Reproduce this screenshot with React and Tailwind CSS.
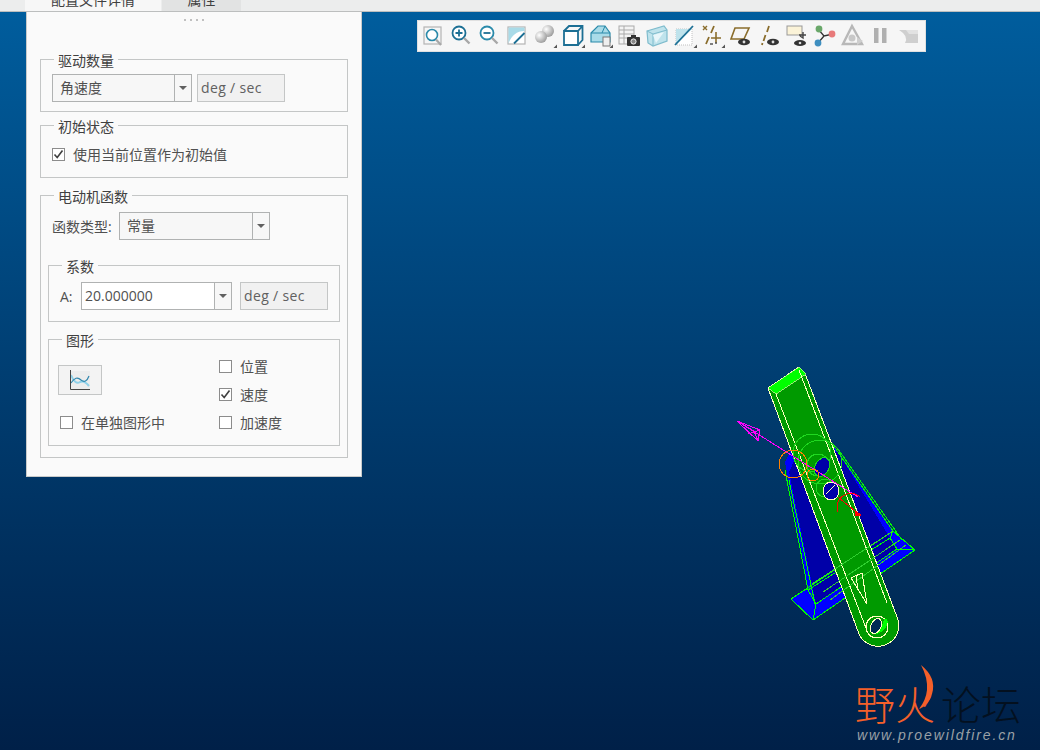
const FONT = "font-['Open_Sans','Noto_Sans_CJK_SC',sans-serif]";

const Group = ({ title, legendClass = "ml-[2px]", className = "", children }) => (
  <fieldset className={`border border-[#c4c6c6] ${className}`}>
    <legend className={`${legendClass} h-5 px-1 pt-1 text-[14px] leading-4 text-[#404040]`}>{title}</legend>
    {children}
  </fieldset>
);

const Combo = ({ value, width, white, leftPad = "pl-[7px]" }) => (
  <div
    className={`flex h-7 border border-[#b0b2b2] ${white ? "bg-white text-[#505050]" : "bg-[#f7f7f7] text-[#505050]"}`}
    style={{ width }}
  >
    <div className={`flex-1 ${leftPad} text-[14px] leading-[26px]`}>{value}</div>
    <div className="flex w-[17px] items-center justify-center border-l border-[#b0b2b2] bg-[#f7f7f7]">
      <div className="h-0 w-0 border-x-4 border-t-[4px] border-x-transparent border-t-[#606060]" />
    </div>
  </div>
);

const Unit = ({ width }) => (
  <div
    className="h-7 border border-[#c4c6c6] bg-[#f1f1f1] pl-[3px] text-[14px] leading-[25px] tracking-[0.35px] text-[#606060]"
    style={{ width }}
  >
    deg / sec
  </div>
);

const Check = ({ label, checked, className = "" }) => (
  <div className={`flex h-5 items-center gap-2 ${className}`}>
    <div className="flex h-[13px] w-[13px] items-center justify-center border border-[#8c8c8c] bg-white">
      {checked && (
        <svg width="11" height="11" viewBox="0 0 11 11">
          <path d="M1.5 5.5 L4.2 8.5 L9.5 1.5" fill="none" stroke="#404040" strokeWidth="1.6" />
        </svg>
      )}
    </div>
    <span className="text-[14px] text-[#505050]">{label}</span>
  </div>
);

const Corner = () => <path d="M25 25 L25 21.5 L21.5 25 Z" fill="#555" />;

const icons = [
  // refit
  <>
    <rect x="4" y="4" width="17" height="17" fill="#f6f6f6" stroke="#b4b4b4" strokeWidth="1.2" />
    <circle cx="12" cy="12" r="5.5" fill="#fff" stroke="#2a8aaa" strokeWidth="1.6" />
    <path d="M16 16.5 L21 22" stroke="#a8a8a8" strokeWidth="2.2" />
  </>,
  // zoom in
  <>
    <circle cx="11" cy="10" r="6.5" fill="#fff" stroke="#1c6f94" strokeWidth="1.8" />
    <path d="M7.5 10 H14.5 M11 6.5 V13.5" stroke="#1c6f94" strokeWidth="1.8" />
    <path d="M16 15 L21.5 20.5" stroke="#a8a8a8" strokeWidth="2.4" />
  </>,
  // zoom out
  <>
    <circle cx="11" cy="10" r="6.5" fill="#fff" stroke="#2a8aaa" strokeWidth="1.8" />
    <path d="M7.5 10 H14.5" stroke="#1c6f94" strokeWidth="1.8" />
    <path d="M16 15 L21.5 20.5" stroke="#a8a8a8" strokeWidth="2.4" />
  </>,
  // repaint
  <>
    <rect x="4" y="4" width="17" height="17" fill="#fff" stroke="#b4b4b4" strokeWidth="1.2" />
    <path d="M4.5 4.5 H20.5 V8 Q9 8 4.5 20.5 Z" fill="#a9dbe8" />
    <path d="M10 20.5 L20.5 10" stroke="#1c6f94" strokeWidth="1.8" />
  </>,
  // appearance
  <>
    <defs>
      <radialGradient id="ball" cx="0.35" cy="0.35" r="0.8">
        <stop offset="0" stopColor="#ffffff" />
        <stop offset="1" stopColor="#8c8c8c" />
      </radialGradient>
    </defs>
    <circle cx="16" cy="8" r="6" fill="url(#ball)" />
    <circle cx="9" cy="14" r="6" fill="url(#ball)" />
    <Corner />
  </>,
  // named view cube
  <>
    <path d="M4 8 H18 V22 H4 Z" fill="#fff" stroke="#1c6f94" strokeWidth="1.8" />
    <path d="M4 8 L9 3 H22.5 V17 L18 22 M18 8 L22.5 3" fill="none" stroke="#1c6f94" strokeWidth="1.8" />
    <Corner />
  </>,
  // section box
  <>
    <path d="M3 10 L10 3 H17 L22 10 V19 H3 Z" fill="#a9dbe8" stroke="#2a8aaa" strokeWidth="1.2" />
    <path d="M3 10 H22 M17 3 L14 10" stroke="#2a8aaa" strokeWidth="1" fill="none" />
    <rect x="15" y="14" width="7" height="9" fill="#eee" stroke="#777" />
    <Corner />
  </>,
  // table with camera
  <>
    <rect x="3" y="3" width="15" height="18" fill="#f4f4f4" stroke="#aaa" />
    <path d="M3 7 H18 M3 11 H18 M3 15 H18 M8 3 V21" stroke="#aaa" />
    <rect x="11" y="14" width="13" height="9" rx="1" fill="#333" />
    <rect x="15" y="12" width="5" height="3" fill="#333" />
    <circle cx="17.5" cy="18.5" r="2.6" fill="#888" stroke="#eee" />
  </>,
  // translucent cube
  <>
    <path d="M3 8 L20 3 L23 7 V18 L9 23 L4 20 Z" fill="#bfe3ec" stroke="#7fbccd" strokeWidth="1.2" />
    <path d="M3 8 L9 11 L23 7 M9 11 V23" stroke="#7fbccd" fill="none" />
    <path d="M9 12 L20 9 L12 20 Z" fill="#e8f6fa" />
  </>,
  // plane diagonal
  <>
    <path d="M4 6 H20 V22 H4 Z" fill="#fff" stroke="#c0c0c0" strokeDasharray="1 1" />
    <path d="M4 6 H20 L4 22 Z" fill="#bfe3ec" />
    <path d="M3 22 L21 3" stroke="#1c6f94" strokeWidth="1.8" />
    <Corner />
  </>,
  // datum points
  <>
    <path d="M3 3 L7 7 M7 3 L3 7" stroke="#8a6d2c" strokeWidth="1.4" />
    <path d="M14 3 L11 10 M9 14 L6 21" stroke="#8a6d2c" strokeWidth="1.8" />
    <path d="M16 9 V20 M11 15 H21" stroke="#8a6d2c" strokeWidth="1.6" />
    <path d="M15 20 L17 20 M10 21 H13" stroke="#555" strokeWidth="1.4" />
    <Corner />
  </>,
  // plane display
  <>
    <path d="M7 5 H21 L16 16 H3 Z" fill="none" stroke="#8a6d2c" strokeWidth="1.6" />
    <ellipse cx="16" cy="19" rx="6" ry="3.2" fill="#333" />
    <circle cx="16" cy="19" r="1.4" fill="#ddd" />
  </>,
  // axis display
  <>
    <path d="M13 3 L11 9 M9.5 12 L7.5 18 M6.5 20 L6 22" stroke="#8a6d2c" strokeWidth="1.8" />
    <ellipse cx="17" cy="19" rx="6" ry="3.2" fill="#333" />
    <circle cx="17" cy="19" r="1.4" fill="#ddd" />
  </>,
  // note display
  <>
    <rect x="3" y="3" width="15" height="9" fill="#fbf3d8" stroke="#999" />
    <path d="M15 12 H22 M19 9 V15 L16 13" stroke="#444" strokeWidth="1.4" fill="none" />
    <ellipse cx="16" cy="20" rx="6" ry="3" fill="#333" />
    <circle cx="16" cy="20" r="1.3" fill="#ddd" />
  </>,
  // connection nodes
  <>
    <path d="M6 6 L12 13 L21 11 M12 13 L6 20" stroke="#333" strokeWidth="1.3" fill="none" />
    <circle cx="7" cy="6" r="3.4" fill="#6aa86a" />
    <circle cx="20" cy="11" r="3.4" fill="#e87a7a" />
    <circle cx="6" cy="20" r="3.4" fill="#3f8fc0" />
  </>,
  // disabled triangle
  <>
    <path d="M12 3 L22 21 H3 Z" fill="none" stroke="#b8b8b8" strokeWidth="2.4" />
    <circle cx="12" cy="15" r="3.5" fill="#c8c8c8" />
    <path d="M17 14 L23 18 L17 22 Z" fill="#cfcfcf" />
  </>,
  // pause
  <>
    <rect x="6" y="5" width="4.5" height="15" fill="#b0b0b0" />
    <rect x="14" y="5" width="4.5" height="15" fill="#b0b0b0" />
  </>,
  // disabled swept block
  <>
    <path d="M3 7 H22 V20 H9 Q13 13 3 7 Z" fill="#cfcfcf" />
    <path d="M10 7 H22 V11 H13 Z" fill="#e2e2e2" />
  </>,
];

const Toolbar = () => (
  <div className="mt-2 ml-[55px] flex h-[32px] w-[509px] items-center gap-[2px] self-start border border-[#e0e0e0] bg-[#f6f6f6] pl-[2px]">
    {icons.map((icon, i) => (
      <svg key={i} width="26" height="26" viewBox="0 0 26 26" className="shrink-0">
        {icon}
      </svg>
    ))}
  </div>
);

// wireframe part, page coordinates minus the canvas origin (y - 12)
const Model = () => (
  <svg
    width="1040"
    height="738"
    viewBox="0 12 1040 738"
    shapeRendering="crispEdges"
    className="absolute top-0 left-0"
  >
    {/* bracket */}
    <path d="M785 462 L795 442 L835 447 L893 531 L915 550 L813 620 L791 599 L808 588 Z" fill="#0000ff" />
    <path d="M789 472 L800 448 L838 452 L890 538 L897 549 L816 604 Z" fill="#0000a8" />
    <path d="M791 599 L813 620 L915 550 L893 531 Z" fill="none" stroke="#00ff00" />
    <path d="M816 604 L897 549 L890 538 L808 590 Z" fill="none" stroke="#00ff00" />
    <path d="M791 599 L808 588 M813 620 L816 604 M915 550 L897 549 M893 531 L890 538" stroke="#00ff00" />
    <path d="M785 470 L808 590 M789 480 L815 604 M833 445 L893 531 M838 449 L902 540" stroke="#00ff00" fill="none" />
    {/* arm */}
    <path d="M768 388 L799 367 L806 376 L897 617 A20.5 20.5 0 0 1 859 634 Z" fill="#009a00" stroke="#ffffc0" />
    <path d="M768 388 L799 367 L806 374 L776 394 Z" fill="#00ff00" stroke="#ffffc0" strokeWidth="0.6" />
    <path d="M776 394 L866 628 M799 370 L887 603" stroke="#ffffc0" fill="none" />
    <path d="M812 584 L893 531 M823 592 L900 540 M830 600 L906 545" stroke="#30d030" fill="none" />
    {/* holes and rings */}
    <circle cx="812" cy="453" r="19" fill="none" stroke="#20d820" />
    <circle cx="820" cy="462" r="22" fill="none" stroke="#20d820" />
    <circle cx="818" cy="465" r="11" fill="none" stroke="#20d820" />
    <ellipse cx="822" cy="467" rx="7" ry="10" transform="rotate(30 822 467)" fill="#0000a8" stroke="#20d820" />
    <circle cx="825" cy="488" r="9" fill="none" stroke="#20d820" />
    <ellipse cx="831" cy="491" rx="8" ry="9" fill="#0000a8" stroke="#ffffc0" />
    <path d="M826 494 L835 485" stroke="#ffffc0" />
    {/* end of the arm */}
    <circle cx="877" cy="627" r="11" fill="#009a00" stroke="#ffffc0" />
    <path d="M876 634 Q886 632 888 622 Q886 617 884 619 Q882 630 874 631 Z" fill="#00ff00" />
    <ellipse cx="876" cy="626" rx="5" ry="8" transform="rotate(25 876 626)" fill="#002a55" stroke="#ffffc0" />
    <path d="M851 578 L862 573 L867 604 Z M856 576 L858 590" fill="none" stroke="#ffffc0" />
    {/* motor symbol */}
    <path d="M737 421 L858 497" stroke="#ff00ff" />
    <path d="M737 421 L760 430 L758 441 Z M737 421 L754 431 L758 441 M760 430 L748 434" fill="none" stroke="#ff00ff" />
    <circle cx="793" cy="464" r="14" fill="none" stroke="#ff8000" />
    <circle cx="813" cy="475" r="6" fill="none" stroke="#ff8000" />
    <path d="M837 505 A14 14 0 0 1 860 497 M837 505 V512 M838 497 L860 515" fill="none" stroke="#ff0000" />
    <path d="M855 511 L861 515 L856 516 Z" fill="#ff0000" stroke="#ff0000" />
  </svg>
);

const Watermark = () => (
  <div className="absolute right-[18px] bottom-[7px] flex w-[167px] flex-col">
    <div className="flex h-[52px] items-end pb-[2px] text-[40px] leading-none font-light whitespace-nowrap">
      <span className="text-[#f4602a]">野</span>
      <span className="relative text-[#f4602a]">
        火
        <svg width="24" height="50" viewBox="0 0 24 50" className="absolute -top-[21px] left-[20px]">
          <path d="M6 1 Q22 14 17 30 Q14 41 4 45 Q11 36 12 26 Q13 14 6 1 Z" fill="#f4602a" />
        </svg>
      </span>
      <span className="ml-[6px] text-[#03101f]">论坛</span>
    </div>
    <div className="pl-[2px] font-['Liberation_Sans',sans-serif] text-[14px] leading-4 tracking-[1.9px] whitespace-nowrap text-[#9aa0a6] italic">
      www.proewildfire.cn
    </div>
  </div>
);

export default function App() {
  return (
    <div className={`relative flex h-[750px] w-[1040px] flex-col overflow-hidden ${FONT}`}>
      {/* tabs */}
      <div className="flex h-3 shrink-0 overflow-hidden border-b border-[#bcbebe] bg-[#eceded] pl-[25px] text-[14px] leading-5 text-[#404040]">
        <div className="w-[136px] bg-[#f7f7f7] text-center">
          <div className="-mt-[10px]">配置文件详情</div>
        </div>
        <div className="ml-px w-[79px] bg-[#e2e3e3] text-center">
          <div className="-mt-[10px]">属性</div>
        </div>
      </div>

      {/* graphics area */}
      <div className="relative flex flex-1 bg-gradient-to-b from-[#005d9d] to-[#002048]">
        <Model />
        <div className="relative ml-[26px] h-[465px] w-[336px] shrink-0 self-start border border-t-0 border-[#c8caca] bg-[#fafafa] px-[13px]">
          <div className="flex h-[37px] justify-center gap-1 pt-[7px]">
            {[0, 1, 2, 3].map((d) => (
              <div key={d} className="h-[2px] w-[2px] bg-[#c0c0c0]" />
            ))}
          </div>

          <Group title="驱动数量" className="px-[11px] pt-[5px] pb-[9px]">
            <div className="flex gap-[5px]">
              <Combo value="角速度" width={140} />
              <Unit width={88} />
            </div>
          </Group>

          <Group title="初始状态" className="mt-[3px] px-[11px] pt-[9px] pb-[13px]">
            <Check label="使用当前位置作为初始值" checked />
          </Group>

          <Group title="电动机函数" legendClass="ml-[6px]" className="mt-[7px] px-[7px] pt-[7px] pb-[11px]">
            <div className="flex items-center pl-1">
              <span className="w-[67px] text-[14px] text-[#505050]">函数类型:</span>
              <Combo value="常量" width={151} />
            </div>

            <Group title="系数" className="mt-[15px] pt-[7px] pr-[11px] pb-[11px] pl-[11px]">
              <div className="flex items-center">
                <span className="w-[21px] text-[14px] text-[#505050]">A:</span>
                <Combo value="20.000000" width={151} white leftPad="pl-[3px]" />
                <div className="ml-2">
                  <Unit width={88} />
                </div>
              </div>
            </Group>

            <Group title="图形" legendClass="ml-1" className="mt-[7px] pt-2 pr-2 pb-[13px] pl-[9px]">
              <div className="flex">
                <div className="w-[161px]">
                  <div className="mt-2 flex h-[30px] w-11 items-center justify-center border border-[#c4c6c6] bg-[#f3f3f3]">
                    <svg width="22" height="22" viewBox="0 0 22 22">
                      <rect x="2" y="2" width="19" height="18" fill="#ececec" />
                      <path d="M2 6 Q6 16 11 13 Q15 11 20 17" fill="none" stroke="#8fd0e8" strokeWidth="2" />
                      <path d="M2 14 Q7 6 12 11 Q17 15 20 7" fill="none" stroke="#2f86ad" strokeWidth="1.2" />
                      <path d="M1.5 1 V20.5 H21" fill="none" stroke="#444" />
                    </svg>
                  </div>
                  <Check label="在单独图形中" className="mt-[17px] ml-[2px]" />
                </div>
                <div className="-mt-px flex flex-col gap-2">
                  <Check label="位置" />
                  <Check label="速度" checked />
                  <Check label="加速度" />
                </div>
              </div>
            </Group>
          </Group>
        </div>
        <Toolbar />
        <Watermark />
      </div>
    </div>
  );
}
